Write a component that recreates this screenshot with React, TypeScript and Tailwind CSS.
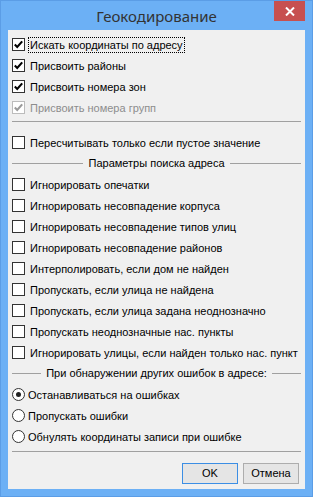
import React from "react";

const font = { fontFamily: '"Liberation Sans", Arial, sans-serif' };

type Row = { label: string; checked?: boolean; disabled?: boolean; focused?: boolean };

const topRows: Row[] = [
  { label: "Искать координаты по адресу", checked: true, focused: true },
  { label: "Присвоить районы", checked: true },
  { label: "Присвоить номера зон", checked: true },
  { label: "Присвоить номера групп", checked: true, disabled: true },
];

const searchRows: Row[] = [
  { label: "Игнорировать опечатки" },
  { label: "Игнорировать несовпадение корпуса" },
  { label: "Игнорировать несовпадение типов улиц" },
  { label: "Игнорировать несовпадение районов" },
  { label: "Интерполировать, если дом не найден" },
  { label: "Пропускать, если улица не найдена" },
  { label: "Пропускать, если улица задана неоднозначно" },
  { label: "Пропускать неоднозначные нас. пункты" },
  { label: "Игнорировать улицы, если найден только нас. пункт" },
];

const radios = [
  { label: "Останавливаться на ошибках", selected: true },
  { label: "Пропускать ошибки" },
  { label: "Обнулять координаты записи при ошибке" },
];

function CheckRow({ label, checked, disabled, focused }: Row) {
  return (
    <div className="flex h-[21px] items-center">
      <div
        className={
          "flex h-[13px] w-[13px] shrink-0 items-center justify-center border bg-white " +
          (disabled ? "border-[#bcbcbc]" : "border-[#333333]")
        }
      >
        {checked && (
          <svg width="11" height="11" viewBox="0 0 11 11">
            <path
              d="M1.8 5.6 L4.2 8 L9.2 2.4"
              fill="none"
              stroke={disabled ? "#9a9a9a" : "#000"}
              strokeWidth="2.1"
            />
          </svg>
        )}
      </div>
      <span
        className={
          "ml-[3px] whitespace-nowrap border px-[1px] text-[11px] leading-[14px] " +
          (focused ? "border-dotted border-black " : "border-transparent ") +
          (disabled ? "text-[#8d8d8d]" : "text-black")
        }
      >
        {label}
      </span>
    </div>
  );
}

function GroupHeader({ title }: { title: string }) {
  return (
    <div className="flex h-[21px] items-center">
      <div className="h-px flex-1 bg-[#a0a0a0]" />
      <span className="whitespace-nowrap px-[5px] text-[11px] text-black">{title}</span>
      <div className="h-px flex-1 bg-[#a0a0a0]" />
    </div>
  );
}

export default function App() {
  return (
    <div
      className="flex h-[497px] w-[313px] flex-col border border-[#5b9de6] bg-[#6cb0f5] px-[7px] pb-[7px]"
      style={font}
    >
      {/* Title bar */}
      <div className="grid h-[29px] shrink-0 grid-cols-[1fr_auto_1fr]">
        <div />
        <div
          className="flex items-center pt-[1px] text-[15px] text-[#333333]"
          style={{ fontFamily: '"Noto Sans", "Open Sans", sans-serif' }}
        >
          Геокодирование
        </div>
        <div className="flex justify-end">
          <div className="flex h-[20px] w-[31px] items-center justify-center bg-[#c75050]">
            <svg width="10" height="9" viewBox="0 0 10 9">
              <path d="M1 0.5 L9 8.5 M9 0.5 L1 8.5" stroke="#fff" strokeWidth="2" />
            </svg>
          </div>
        </div>
      </div>

      {/* Client area */}
      <div className="flex flex-1 flex-col bg-[#f0f0f0] px-[4px] pt-[4px] pb-[5px]">
        {topRows.map((r) => (
          <CheckRow key={r.label} {...r} />
        ))}

        <div className="mt-[3px] mb-[10px] h-px bg-[#a0a0a0]" />

        <CheckRow label="Пересчитывать только если пустое значение" />

        <GroupHeader title="Параметры поиска адреса" />
        {searchRows.map((r) => (
          <CheckRow key={r.label} {...r} />
        ))}

        <GroupHeader title="При обнаружении других ошибок в адресе:" />
        {radios.map((r) => (
          <div key={r.label} className="flex h-[21px] items-center">
            <div className="flex h-[13px] w-[13px] shrink-0 items-center justify-center rounded-full border border-[#333333] bg-white">
              {r.selected && <div className="h-[5px] w-[5px] rounded-full bg-[#222222]" />}
            </div>
            <span className="ml-[3px] whitespace-nowrap text-[11px] leading-[14px] text-black">
              {r.label}
            </span>
          </div>
        ))}

        <div className="mt-[4px] h-px bg-[#a0a0a0]" />

        <div className="mt-[11px] flex justify-end gap-[5px] pr-[2px]">
          <button className="h-[21px] w-[56px] border border-[#3c8ee4] bg-[#e5e5e5] text-[11px] text-black">
            OK
          </button>
          <button className="h-[21px] w-[56px] border border-[#adadad] bg-[#e5e5e5] text-[11px] text-black">
            Отмена
          </button>
        </div>
      </div>
    </div>
  );
}
